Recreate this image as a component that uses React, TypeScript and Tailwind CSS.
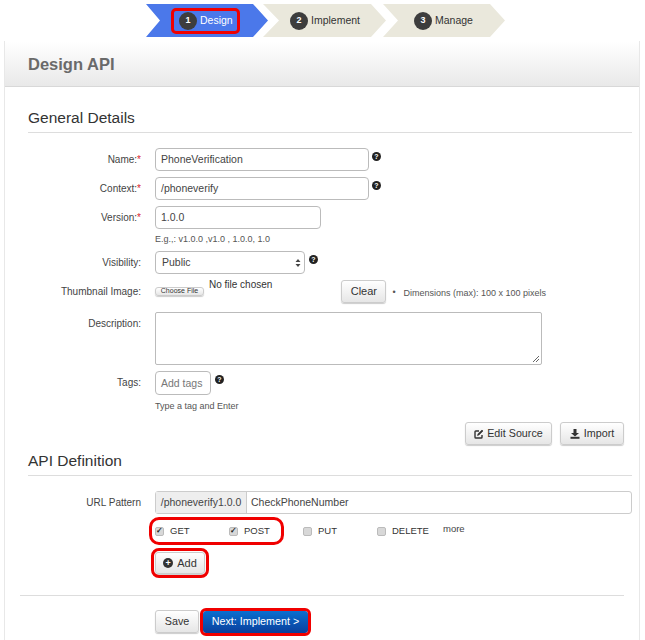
import React from "react";

const btn =
  "flex items-center justify-center rounded-[3px] border border-[#ccc] bg-gradient-to-b from-white to-[#e6e6e6] text-[#333] shadow-[0_1px_1px_rgba(0,0,0,0.2)]";
const field = "rounded-[4px] border border-[#bbb] bg-white text-[#444] text-[10.5px] flex items-center";

const Help = () => (
  <span className="ml-[3px] flex h-[9px] w-[9px] items-center justify-center rounded-full bg-[#222] text-[7px] font-bold leading-none text-white">
    ?
  </span>
);

const EditIcon = () => (
  <svg width="10" height="10" viewBox="0 0 10 10" fill="none" stroke="#333">
    <path d="M8 6v2.2a.8.8 0 0 1-.8.8H1.8a.8.8 0 0 1-.8-.8V2.8a.8.8 0 0 1 .8-.8H5" strokeWidth="1.4" />
    <path d="M3.5 6.5 4 4.8 8 1l1 1-4 3.9z" fill="#333" strokeWidth="0.6" />
  </svg>
);

const ImportIcon = () => (
  <svg width="10" height="10" viewBox="0 0 10 10" fill="#333">
    <path d="M3.5 0h3v4H9L5 7.5 1 4h2.5z" />
    <rect x="0.5" y="7.8" width="9" height="2" />
  </svg>
);

const Step = ({ n, label, active, clip, inner }: { n: number; label: string; active?: boolean; clip: string; inner: string }) => (
  <div
    className={`flex h-[33px] w-[123px] items-center ${clip} ${active ? "bg-[#4b78ea] text-white" : "bg-[#eae8dc] text-[#333]"}`}
  >
    <div
      className={`flex items-center gap-[3px] text-[10.5px] ${inner} ${
        active ? "rounded-[3px] outline-[3px] -outline-offset-[1px] outline-[#f00000] py-[2px]" : ""
      }`}
    >
      <span className="flex h-[18px] w-[18px] items-center justify-center rounded-full bg-[#3d3d3d] text-[9px] font-bold text-white">
        {n}
      </span>
      {label}
    </div>
  </div>
);

const Row = ({ label, required, className, children }: { label: string; required?: boolean; className?: string; children: React.ReactNode }) => (
  <div className={`flex ${className ?? ""}`}>
    <div className="w-[127px] shrink-0 pr-[14px] pt-[4px] text-right text-[10px] text-[#444]">
      {label}
      {required && <span className="text-[#d9232e]">*</span>}
    </div>
    <div className="min-w-0 flex-1">{children}</div>
  </div>
);

const Check = ({ on, label, w }: { on?: boolean; label: string; w: string }) => (
  <div className={`flex items-center ${w}`}>
    <span className="mr-[6px] flex h-[9px] w-[9px] items-center justify-center rounded-[2px] border border-[#bbb] bg-[#d8d8d8] text-[8px] font-bold leading-none text-[#222]">
      {on ? "✓" : ""}
    </span>
    <span className="pt-[1px] text-[9.5px] text-[#333]">{label}</span>
  </div>
);

export default function App() {
  return (
    <div className="h-[640px] w-[645px] overflow-hidden bg-white font-['Liberation_Sans',sans-serif]">
      <div className="ml-[146px] flex h-[41px] items-start pt-[4px]">
        <Step
          n={1}
          label="Design"
          active
          inner="ml-[27px] pl-[6px] pr-[5px]"
          clip="[clip-path:polygon(0_0,107px_0,122px_50%,107px_100%,0_100%,14px_50%)]"
        />
        <div className="-ml-[6px]">
          <Step
            n={2}
            label="Implement"
            inner="ml-[27px]"
            clip="[clip-path:polygon(0_0,108px_0,123px_50%,108px_100%,0_100%,16px_50%)]"
          />
        </div>
        <div className="-ml-[3px]">
          <Step
            n={3}
            label="Manage"
            inner="ml-[31px]"
            clip="[clip-path:polygon(0_0,107px_0,122px_50%,107px_100%,0_100%,15px_50%)]"
          />
        </div>
      </div>

      <div className="ml-[4px] h-[599px] w-[636px] border-x border-[#e8e8e8]">
        <div className="flex h-[46px] items-center border-b border-[#d8d8d8] bg-gradient-to-b from-white to-[#e9e9e9] pl-[23px] pt-[2px] text-[16.5px] font-bold text-[#6a6a6a]">
          Design API
        </div>

        <div className="pl-[23px] pr-[7px]">
          <h2 className="border-b border-[#ddd] pb-[4px] pt-[21px] text-[15.5px] leading-[20px] text-[#333]">General Details</h2>

          <Row label="Name:" required className="mt-[15px]">
            <div className="flex items-start">
              <div className={`${field} h-[23px] w-[214px] pl-[5px]`}>PhoneVerification</div>
              <div className="pt-[4px]"><Help /></div>
            </div>
          </Row>
          <Row label="Context:" required className="mt-[6px]">
            <div className="flex items-start">
              <div className={`${field} h-[23px] w-[214px] pl-[5px]`}>/phoneverify</div>
              <div className="pt-[4px]"><Help /></div>
            </div>
          </Row>
          <Row label="Version:" required className="mt-[6px]">
            <div className={`${field} h-[23px] w-[166px] pl-[5px]`}>1.0.0</div>
            <p className="mt-[4px] text-[9px] leading-[12px] text-[#555]">E.g.,: v1.0.0 ,v1.0 , 1.0.0, 1.0</p>
          </Row>
          <Row label="Visibility:" className="mt-[6px]">
            <div className="flex items-start">
              <div className={`${field} h-[23px] w-[150px] justify-between pl-[6px] pr-[3px]`}>
                Public
                <svg width="6" height="10" viewBox="0 0 6 10" className="text-[#444]">
                  <path d="M3 1 5.5 4H.5zM3 9 .5 6h5z" fill="currentColor" />
                </svg>
              </div>
              <div className="pl-[1px] pt-[4px]"><Help /></div>
            </div>
          </Row>
          <Row label="Thumbnail Image:" className="mt-[6px]">
            <div className="flex items-start">
              <div className={`${btn} mt-[7px] h-[9px] w-[49px] text-[7px]`}>Choose File</div>
              <span className="-mt-[1px] ml-[5px] text-[10px] leading-[12px] text-[#333]">No file chosen</span>
              <div className={`${btn} ml-[69px] h-[23px] w-[45px] text-[11px]`}>Clear</div>
              <span className="ml-[6px] mt-[5px] text-[9px] leading-[14px] text-[#555]">•</span>
              <span className="ml-[8px] mt-[7px] text-[9px] leading-[12px] text-[#555]">Dimensions (max): 100 x 100 pixels</span>
            </div>
          </Row>
          <Row label="Description:" className="mt-[9px]">
            <div className="relative h-[53px] w-[387px] rounded-[2px] border border-[#bbb]">
              <svg width="8" height="8" viewBox="0 0 8 8" className="absolute bottom-[1px] right-[1px] text-[#666]">
                <path d="M1 7 7 1M4 7 7 4" stroke="currentColor" fill="none" />
              </svg>
            </div>
          </Row>
          <Row label="Tags:" className="mt-[6px]">
            <div className="flex items-start">
              <div className={`${field} h-[24px] w-[56px] pl-[5px] pt-[1px] text-[#777]`}>Add tags</div>
              <div className="pl-[1px] pt-[4px]"><Help /></div>
            </div>
            <p className="mt-[5px] text-[9px] leading-[12px] text-[#555]">Type a tag and Enter</p>
          </Row>

          <div className="mt-[10px] flex justify-end gap-[8px] pr-[8px]">
            <div className={`${btn} h-[23px] w-[87px] gap-[3px] text-[10.75px]`}>
              <EditIcon />
              Edit Source
            </div>
            <div className={`${btn} h-[23px] w-[64px] gap-[4px] text-[10.75px]`}>
              <ImportIcon />
              Import
            </div>
          </div>

          <h2 className="border-b border-[#ddd] pb-[4px] pt-[6px] text-[15.5px] leading-[20px] text-[#333]">API Definition</h2>

          <Row label="URL Pattern" className="mt-[15px]">
            <div className="flex h-[23px] items-stretch rounded-[3px] border border-[#ccc] text-[10.5px] text-[#444]">
              <div className="flex w-[91px] items-center justify-center border-r border-[#ccc] bg-[#eee]">/phoneverify1.0.0</div>
              <div className="flex flex-1 items-center pl-[4px]">CheckPhoneNumber</div>
            </div>
            <div className="mt-[11px] flex h-[12px] items-center">
              <div className="flex items-center rounded-[4px] outline-[3px] outline-offset-[3px] outline-[#f00000]">
                <Check on label="GET" w="w-[74px]" />
                <Check on label="POST" w="w-[49px]" />
              </div>
              <div className="ml-[25px] flex items-center">
                <Check label="PUT" w="w-[74px]" />
                <Check label="DELETE" w="w-[66px]" />
                <span className="-mt-[3px] text-[9.5px] text-[#444]">more</span>
              </div>
            </div>
            <div className="mt-[15px] w-fit rounded-[4px] outline-[3px] outline-offset-[1px] outline-[#f00000]">
              <div className={`${btn} h-[22px] w-[50px] gap-[4px] text-[11px]`}>
                <span className="flex h-[10px] w-[10px] items-center justify-center rounded-full bg-[#333] text-[9px] font-bold leading-none text-white">+</span>
                Add
              </div>
            </div>
          </Row>
        </div>

        <div className="ml-[15px] mr-[15px] mt-[21px] border-t border-[#ddd] pt-[14px]">
          <div className="ml-[135px] flex items-center gap-[4px]">
            <div className={`${btn} h-[23px] w-[44px] text-[10.75px]`}>Save</div>
            <div className="flex h-[22px] w-[105px] items-center justify-center rounded-[3px] bg-gradient-to-b from-[#0b6fd0] to-[#0a3f9c] text-[10.75px] font-medium text-white outline-[3px] outline-[#f00000]">
              Next: Implement &gt;
            </div>
          </div>
        </div>
      </div>
    </div>
  );
}
